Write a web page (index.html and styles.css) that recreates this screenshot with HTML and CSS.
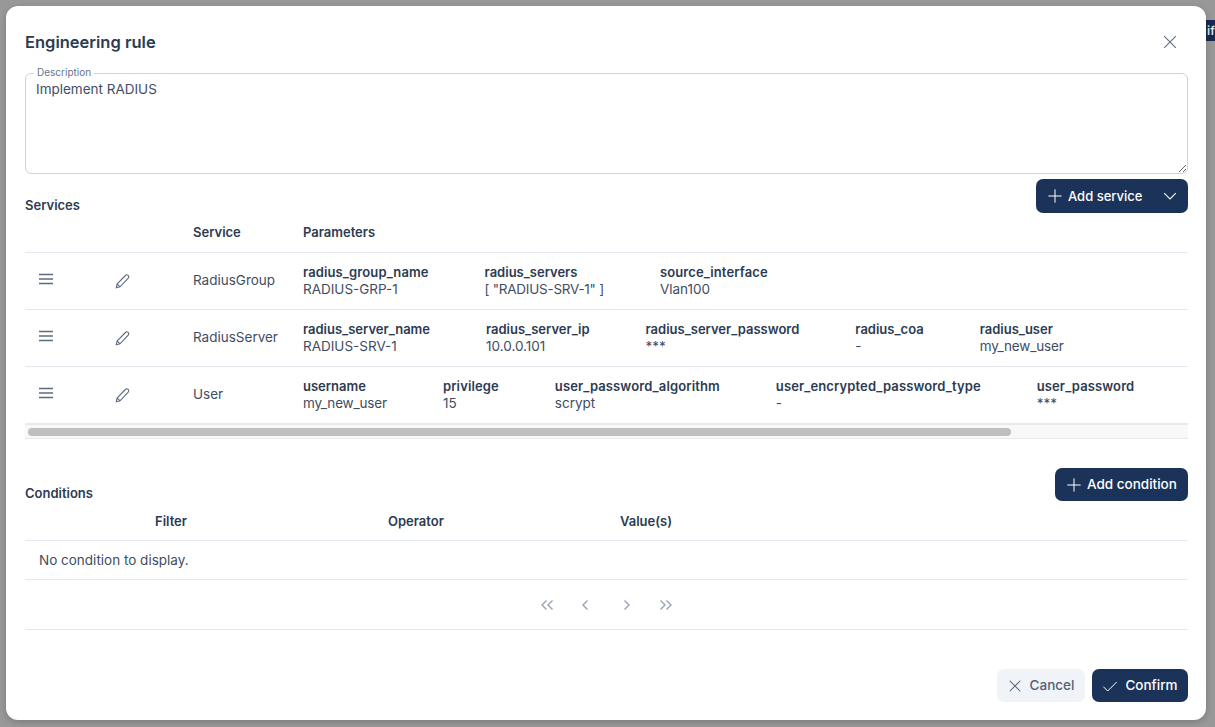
FILE: index.html
```html
<!DOCTYPE html>
<html lang="en">
<head>
<meta charset="utf-8">
<title>Engineering rule</title>
<link rel="stylesheet" href="styles.css">
</head>
<body>
<div class="bg-badge">if</div>
<div class="modal">
  <header class="modal-head">
    <h2>Engineering rule</h2>
    <button class="close" aria-label="Close"><svg viewBox="0 0 24 24" class="ic14"><path d="M2 2l20 20M22 2L2 22"/></svg></button>
  </header>
  <div class="field">
    <label>Description</label>
    <textarea>Implement RADIUS</textarea>
  </div>
  <div class="section-head services-head">
    <h3>Services</h3>
    <button class="btn primary add-service">
      <svg viewBox="0 0 24 24" class="ic16"><path d="M12 2v20M2 12h20"/></svg>
      <span>Add service</span>
      <svg viewBox="0 0 24 24" class="ic14 chev"><path d="M2 7l10 10L22 7"/></svg>
    </button>
  </div>
  <div class="scroller">
    <div class="svc-table">
      <div class="svc-row svc-header">
        <div class="c-drag"></div><div class="c-edit"></div>
        <div class="c-name th">Service</div><div class="th">Parameters</div>
      </div>
      <div class="svc-row">
        <div class="c-drag"><svg viewBox="0 0 14 12" class="drag"><path d="M0 1.500h14M0 6h14M0 10.500h14"/></svg></div>
        <div class="c-edit"><svg viewBox="0 0 16 16" class="pencil"><path d="M1.300 14.700l.8-3.700 8.300-8.500a1.900 1.900 0 0 1 2.800 2.700L5 13.800zM2.100 11l2.900 2.800"/></svg></div>
        <div class="c-name">RadiusGroup</div>
        <div class="params">
          <div><b class="wide">radius_group_name</b><span>RADIUS-GRP-1</span></div>
          <div><b>radius_servers</b><span class="tight">[ "RADIUS-SRV-1" ]</span></div>
          <div><b class="wide">source_interface</b><span>Vlan100</span></div>
        </div>
      </div>
      <div class="svc-row">
        <div class="c-drag"><svg viewBox="0 0 14 12" class="drag"><path d="M0 1.500h14M0 6h14M0 10.500h14"/></svg></div>
        <div class="c-edit"><svg viewBox="0 0 16 16" class="pencil"><path d="M1.300 14.700l.8-3.700 8.300-8.500a1.900 1.900 0 0 1 2.800 2.700L5 13.800zM2.100 11l2.900 2.800"/></svg></div>
        <div class="c-name">RadiusServer</div>
        <div class="params">
          <div><b>radius_server_name</b><span>RADIUS-SRV-1</span></div>
          <div><b>radius_server_ip</b><span>10.0.0.101</span></div>
          <div><b>radius_server_password</b><span>***</span></div>
          <div><b>radius_coa</b><span>-</span></div>
          <div><b>radius_user</b><span class="snug">my_new_user</span></div>
        </div>
      </div>
      <div class="svc-row">
        <div class="c-drag"><svg viewBox="0 0 14 12" class="drag"><path d="M0 1.500h14M0 6h14M0 10.500h14"/></svg></div>
        <div class="c-edit"><svg viewBox="0 0 16 16" class="pencil"><path d="M1.300 14.700l.8-3.700 8.300-8.500a1.900 1.900 0 0 1 2.800 2.700L5 13.800zM2.100 11l2.900 2.800"/></svg></div>
        <div class="c-name">User</div>
        <div class="params">
          <div><b>username</b><span class="snug">my_new_user</span></div>
          <div><b class="wide">privilege</b><span>15</span></div>
          <div><b class="wide">user_password_algorithm</b><span>scrypt</span></div>
          <div><b class="wide">user_encrypted_password_type</b><span>-</span></div>
          <div><b class="wide">user_password</b><span>***</span></div>
        </div>
      </div>
    </div>
  </div>
  <div class="scroll-track"><div class="scroll-thumb"></div></div>
  <div class="section-head conditions-head">
    <h3>Conditions</h3>
    <button class="btn primary add-condition">
      <svg viewBox="0 0 24 24" class="ic16"><path d="M12 2v20M2 12h20"/></svg>
      <span>Add condition</span>
    </button>
  </div>
  <div class="cond-table">
    <div class="cond-header">
      <div class="th">Filter</div><div class="th">Operator</div><div class="th">Value(s)</div>
    </div>
    <div class="cond-empty">No condition to display.</div>
    <div class="pager">
      <svg viewBox="0 0 14 12" class="pg pg-outer-l"><path d="M6.500 1.500L2 6l4.500 4.500M12.500 1.500L8 6l4.500 4.500"/></svg>
      <svg viewBox="0 0 14 12" class="pg"><path d="M9.500 1.500L5 6l4.500 4.500"/></svg>
      <svg viewBox="0 0 14 12" class="pg"><path d="M4.500 1.500L9 6l-4.500 4.500"/></svg>
      <svg viewBox="0 0 14 12" class="pg pg-outer-r"><path d="M1.500 1.500L6 6l-4.500 4.500M7.500 1.500L12 6l-4.500 4.500"/></svg>
    </div>
  </div>
  <footer class="modal-foot">
    <button class="btn secondary"><svg viewBox="0 0 24 24" class="ic14"><path d="M3 3l18 18M21 3L3 21"/></svg><span>Cancel</span></button>
    <button class="btn primary"><svg viewBox="0 0 24 24" class="ic16"><path d="M2 13l6.500 6.500L22 6"/></svg><span>Confirm</span></button>
  </footer>
</div>
</body>
</html>
```
FILE: styles.css
```css
* { box-sizing: border-box; }
html, body { margin: 0; height: 100%; }
body {
  background: #989898;
  font-family: Inter, "Noto Sans", sans-serif;
  font-size: 13.500px;
  line-height: 17px;
  color: #3f4d63;
  overflow: hidden;
  position: relative;
}
svg { fill: none; stroke: currentColor; display: block; flex: none; }
.bg-badge {
  position: absolute; left: 1206px; top: 20px; width: 9px; height: 21px;
  background: #152a4e; color: #dfe5ee; font-size: 12px; font-weight: 600; line-height: 21px; overflow: hidden; text-indent: 1px;
}
.modal {
  position: absolute; left: 6px; top: 6px; width: 1200px; height: 714px;
  background: #fff; border-radius: 12px; padding: 0 18px 0 19px;
  box-shadow: 0 2px 6px rgba(0,0,0,.2);
  display: flex; flex-direction: column;
}
.modal-head { display: flex; justify-content: space-between; align-items: center; height: 67px; padding-top: 6px; flex: none; }
h2 { margin: 0; font-size: 16.500px; font-weight: 600; color: #2d3b52; }
h3 { margin: 0; font-size: 13px; line-height: 15px; font-weight: 600; color: #2d3b52; }
.close { background: none; border: 0; padding: 0; margin: -2px 11px 0 0; color: #5d6b80; }
.ic14 { width: 14px; height: 14px; stroke-width: 1.800; }
.ic16 { width: 16px; height: 16px; stroke-width: 1.500; }
.field { position: relative; height: 101px; flex: none; }
.field label {
  position: absolute; left: 9px; top: -7px; padding: 0 3px; background: #fff;
  font-size: 10px; line-height: 12px; color: #66758c;
}
.field textarea {
  display: block; width: 100%; height: 100%; border: 1px solid #cbd4e0; border-radius: 6px;
  padding: 7px 10px; font: inherit; color: #3f4d63; background: #fff; outline: 0; resize: vertical;
}
.section-head { display: flex; justify-content: space-between; align-items: flex-end; flex: none; }
.services-head { margin-top: 5px; height: 34px; }
.conditions-head { margin-top: 29px; height: 33px; }
.btn {
  display: inline-flex; align-items: center; border: 0; border-radius: 7px; height: 33px;
  font: inherit; font-weight: 500; padding: 0 12px 0 11px; gap: 6px;
}
.primary { background: #1c3359; color: #fff; }
.secondary { background: #f0f3f8; color: #536178; }
.add-service { width: 152px; height: 34px; gap: 5px; font-size: 13px; padding-right: 11px; }
.add-service .chev { margin-left: auto; }
.add-condition { width: 133px; gap: 5px; padding-right: 0; }
.scroller { overflow: hidden; flex: none; margin-top: 2px; }
.scroll-track {
  flex: none; height: 16px; background: #f8f8f8; padding-left: 3px;
  border-top: 2px solid #e8e9f0; border-bottom: 1px solid #e8e9f0;
  display: flex; align-items: center;
}
.scroll-thumb { width: 983px; height: 8px; border-radius: 4px; background: #bfbfbf; }
.svc-table { width: 1376px; }
.svc-row { display: flex; align-items: center; height: 57px; border-top: 1px solid #e4e7ee; }
.svc-header { height: 37px; border-top: 0; padding-bottom: 3px; }
.th { font-size: 13px; font-weight: 600; color: #2d3b52; }
.c-drag { width: 78px; padding-left: 14px; color: #5d6b80; }
.drag { width: 14px; height: 12px; stroke-width: 1.500; margin-top: -4px; }
.c-edit { width: 90px; padding-left: 12px; color: #5d6b80; }
.pencil { width: 16px; height: 16px; stroke-width: 1.100; margin-top: -1px; }
.c-name { width: 110px; margin-top: -2px; }
.svc-header .c-name { margin-top: 0; }
.params { display: flex; gap: 56px; }
.params div { display: flex; flex-direction: column; }
.params b { font-size: 13px; font-weight: 600; color: #2d3b52; white-space: nowrap; }
.params .wide { letter-spacing: .12px; }
.params span { white-space: nowrap; }
.params .tight { letter-spacing: -.25px; }
.params .snug { letter-spacing: -.15px; }
.cond-table { flex: none; }
.cond-header { display: grid; grid-template-columns: 363px 232px 1fr; height: 40px; padding-top: 2px; align-items: center; border-bottom: 1px solid #e4e7ee; }
.cond-header .th:first-child { padding-left: 130px; }
.cond-empty { height: 39px; padding-left: 14px; display: flex; align-items: center; border-bottom: 1px solid #e4e7ee; }
.pager { height: 50px; display: flex; justify-content: center; align-items: center; gap: 28px; color: #97a3b5; border-bottom: 1px solid #e4e7ee; }
.pg { width: 14px; height: 12px; stroke-width: 1.400; }
.pg-outer-l { margin-right: -4px; }
.pg-outer-r { margin-left: -3px; }
.modal-foot { margin-top: auto; margin-bottom: 18px; display: flex; justify-content: flex-end; gap: 7px; }
.modal-foot .btn { width: 88px; justify-content: center; gap: 8px; padding: 0; }
.modal-foot .primary { width: 96px; gap: 7px; }
```
